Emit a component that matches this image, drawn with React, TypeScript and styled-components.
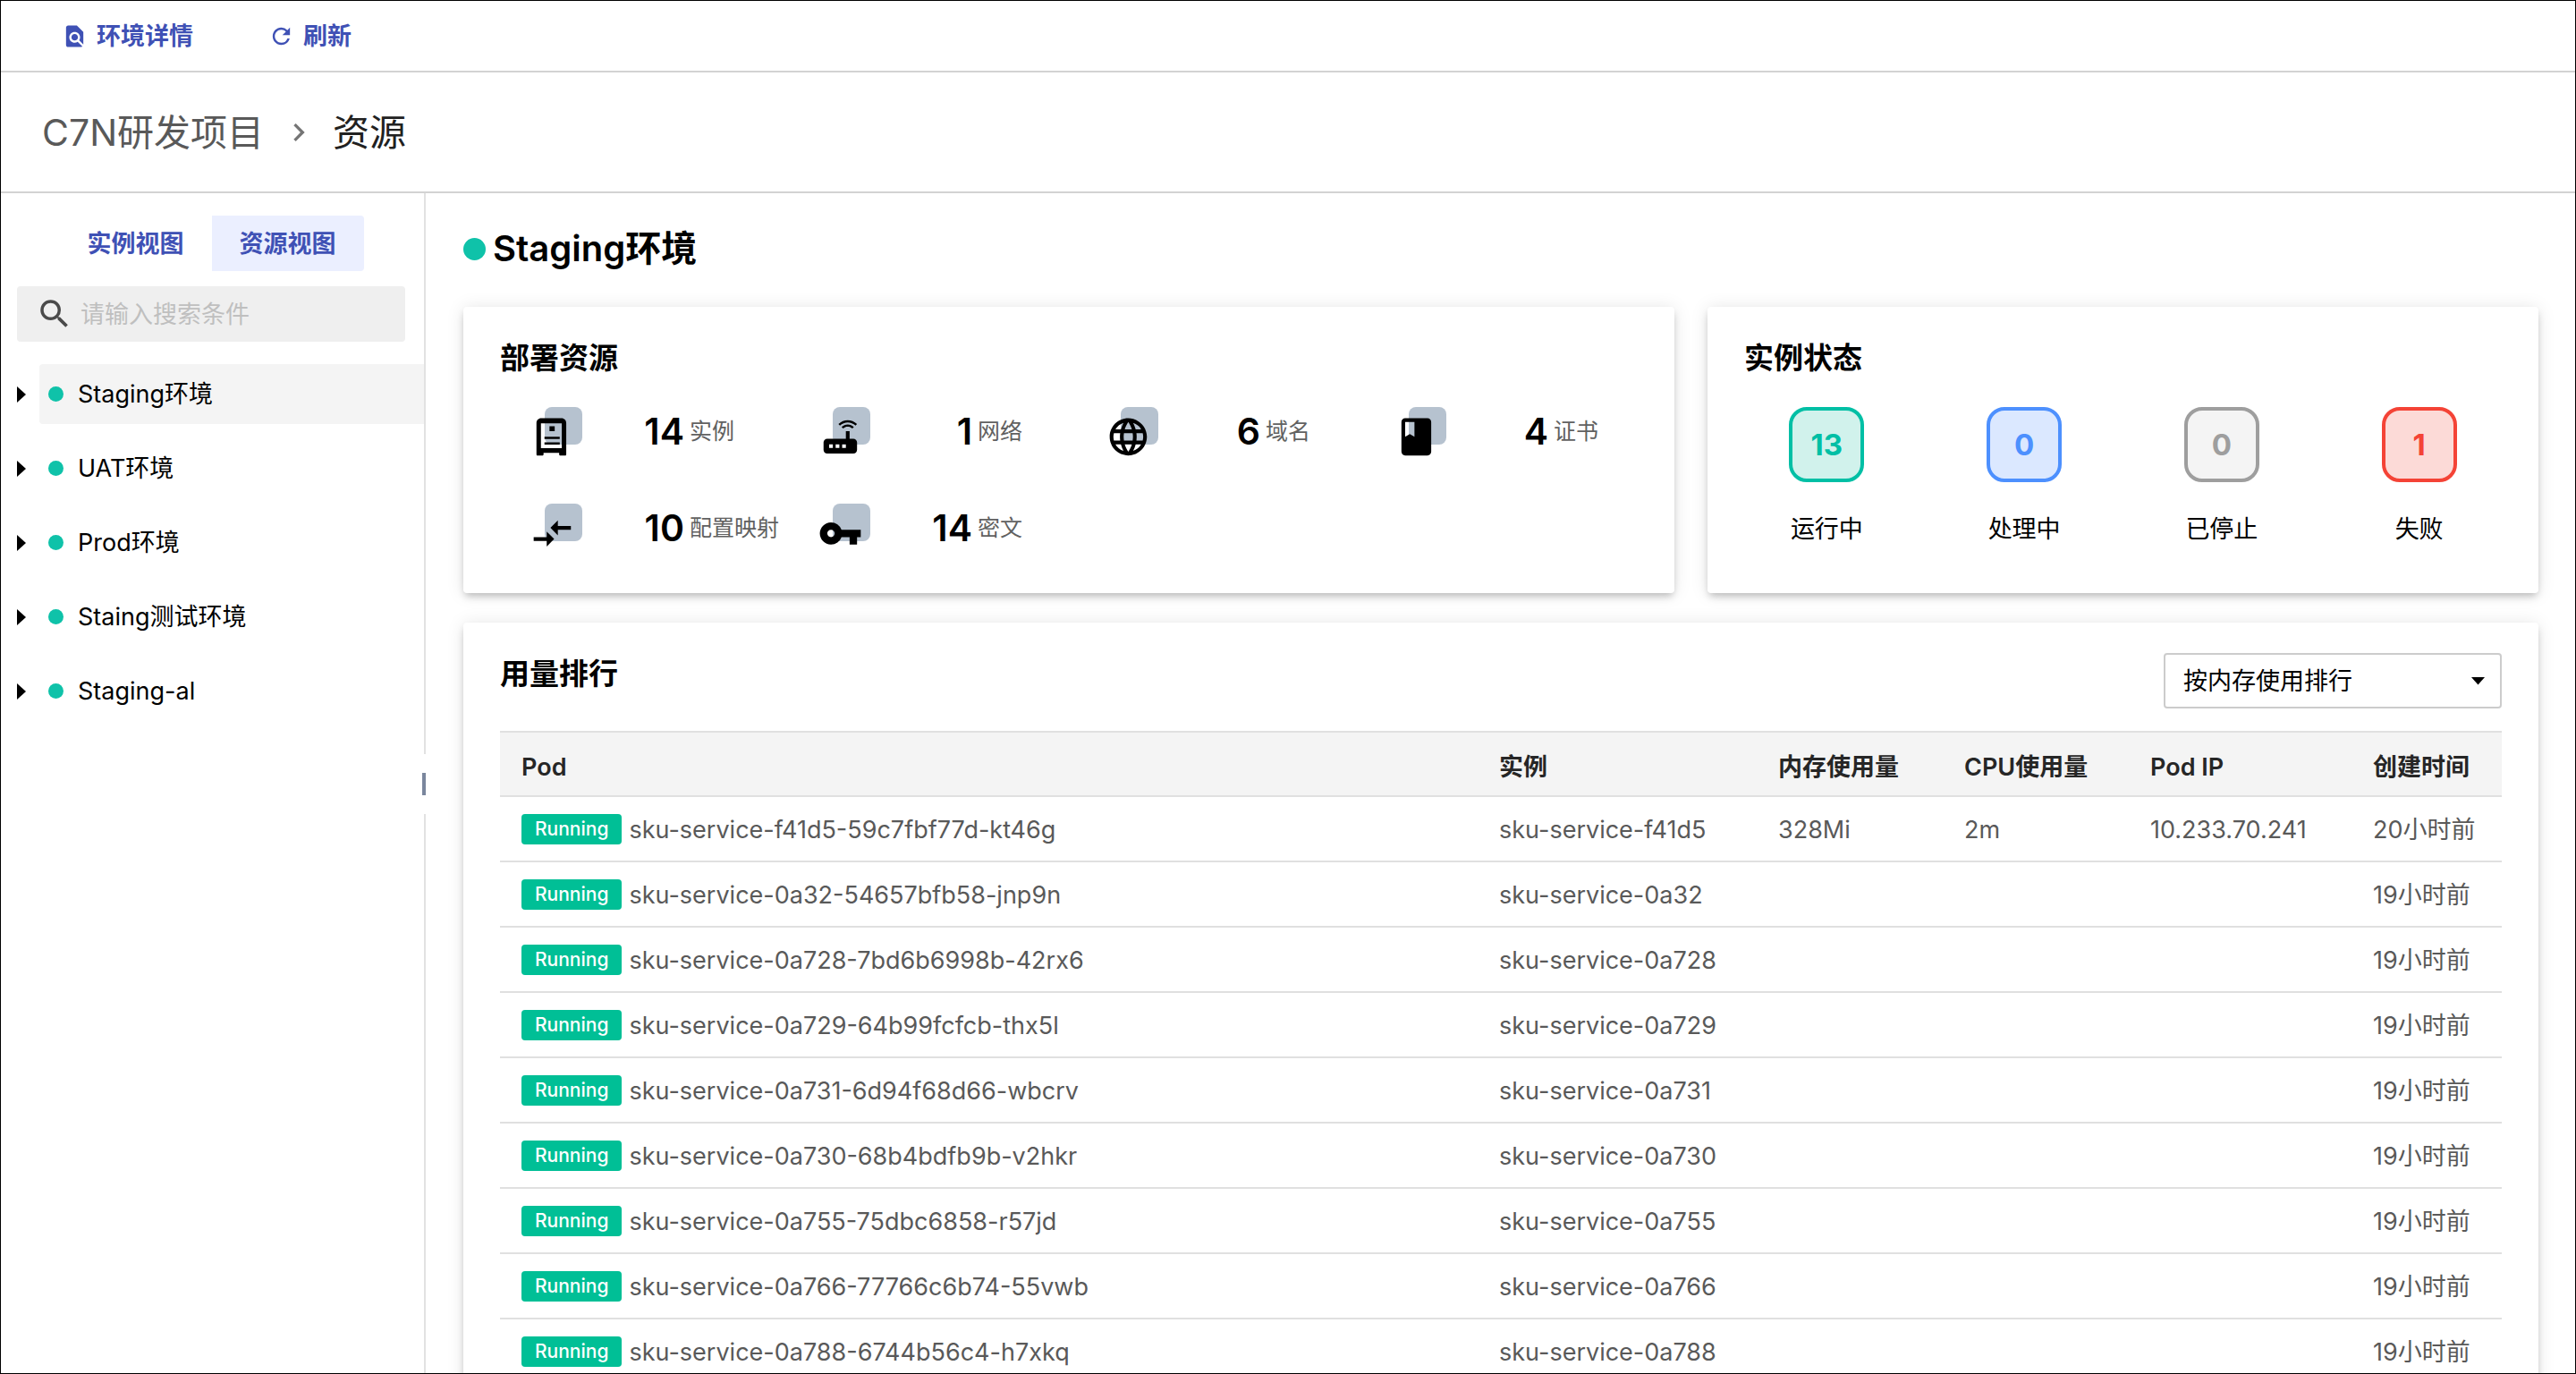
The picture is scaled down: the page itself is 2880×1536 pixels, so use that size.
import React, { useState } from 'react';
import styled, { createGlobalStyle } from 'styled-components';

const teal = '#0fc2a9';
const primary = '#3f51b5';

const GlobalStyle = createGlobalStyle`
  *, *::before, *::after { box-sizing: border-box; }
  body {
    margin: 0;
    background: #fff;
    color: #000;
    font-family: Inter, "Noto Sans CJK SC", sans-serif;
    font-size: 27px;
    line-height: 40px;
  }
  button, input, select { font: inherit; color: inherit; }
  h1, h2, p, ul, ol, dl, dd { margin: 0; padding: 0; }
  ul, ol { list-style: none; }
`;

const Page = styled.div`
  display: flex;
  flex-direction: column;
  height: 100vh;
  overflow: hidden;
  border: 1px solid #000;
`;

const Toolbar = styled.div`
  display: flex;
  flex: none;
  align-items: center;
  gap: 84px;
  height: 80px;
  padding: 2px 68px 0;
  border-bottom: 2px solid #d3d3d3;
`;

const ToolButton = styled.button`
  display: flex;
  align-items: center;
  gap: 10px;
  padding: 0;
  border: 0;
  background: none;
  color: ${primary};
  font-weight: 600;
  cursor: pointer;

  svg { margin-bottom: 2px; }
`;

const Glyph = styled.svg<{ $size: number }>`
  display: block;
  flex: none;
  width: ${p => p.$size}px;
  height: ${p => p.$size}px;
  fill: currentColor;
`;

const Breadcrumb = styled.nav`
  flex: none;
  height: 135px;
  padding: 0 46px;
  border-bottom: 2px solid #d3d3d3;

  ol {
    display: flex;
    align-items: center;
    height: 100%;
    font-size: 41px;
  }
`;

const CrumbLink = styled.a`
  color: #595959;
  text-decoration: none;
`;

const CrumbSeparator = styled.li`
  display: flex;
  width: 77px;
  justify-content: center;
  color: #757575;
`;

const CrumbCurrent = styled.li`
  color: #212121;
`;

const Body = styled.div`
  display: flex;
  flex: 1;
  min-height: 0;
`;

const Sidebar = styled.aside`
  flex: none;
  width: 473px;
  padding-top: 25px;
`;

const Tabs = styled.div`
  display: flex;
  justify-content: center;
  padding-right: 2px;
`;

const Tab = styled.button<{ $active?: boolean }>`
  height: 62px;
  padding: 2px 31px 0;
  border: 0;
  border-radius: 0 4px 4px 0;
  background: ${p => (p.$active ? '#ebefff' : 'transparent')};
  color: ${primary};
  font-weight: 600;
  cursor: pointer;
`;

const SearchBox = styled.label`
  display: flex;
  align-items: center;
  gap: 8px;
  height: 62px;
  margin: 17px 21px 25px 18px;
  padding: 0 21px;
  border-radius: 4px;
  background: #efefef;
  color: #4a4a4a;

  input {
    flex: 1;
    min-width: 0;
    padding: 2px 0 0;
    border: 0;
    outline: 0;
    background: none;
  }
  input::placeholder { color: #bfbfbf; opacity: 1; }
`;

const Tree = styled.ul`
  display: flex;
  flex-direction: column;
  gap: 16px;
`;

const TreeRow = styled.li`
  display: flex;
  align-items: center;
`;

const Expander = styled.button`
  display: flex;
  align-items: center;
  flex: none;
  width: 43px;
  height: 67px;
  padding: 0 0 0 18px;
  border: 0;
  background: none;
  cursor: pointer;
`;

const EnvButton = styled.button<{ $active?: boolean }>`
  display: flex;
  flex: 1;
  align-items: center;
  gap: 16px;
  height: 67px;
  padding: 0 10px;
  border: 0;
  border-radius: 4px 0 0 4px;
  background: ${p => (p.$active ? '#f4f4f4' : 'transparent')};
  cursor: pointer;
`;

const Dot = styled.span<{ $size: number }>`
  flex: none;
  width: ${p => p.$size}px;
  height: ${p => p.$size}px;
  border-radius: 50%;
  background: ${teal};
`;

const Divider = styled.div`
  display: flex;
  flex: none;
  flex-direction: column;
  align-items: flex-end;
  width: 4px;
  margin-left: -2px;

  &::before, &::after {
    content: '';
    width: 2px;
    background: #e2e2e2;
  }
  &::before { flex: 627; }
  &::after { flex: 625; }
`;

const Handle = styled.div`
  width: 4px;
  height: 25px;
  margin: 21px 0;
  background: #7a869d;
`;

const Main = styled.main`
  flex: 1;
  min-width: 0;
  overflow: hidden;
  padding: 41px 41px 0 42px;
`;

const EnvTitle = styled.h1`
  display: flex;
  align-items: center;
  gap: 8px;
  margin-bottom: 44px;
  font-size: 40px;
  font-weight: 600;
  line-height: 42px;
`;

const Card = styled.section`
  border-radius: 4px;
  background: #fff;
  box-shadow: 0 5px 8px -2px rgba(0, 0, 0, 0.24), 0 1px 20px 0 rgba(0, 0, 0, 0.1);
`;

const CardTitle = styled.h2`
  font-size: 33px;
  font-weight: 600;
  line-height: 33px;
`;

const Summary = styled.div`
  display: grid;
  grid-template-columns: 1354fr 929fr;
  gap: 37px;
  margin-bottom: 33px;
`;

const ResourceCard = styled(Card)`
  padding: 41px 25px 44px 41px;
`;

const ResourceGrid = styled.ul`
  display: grid;
  grid-template-columns: repeat(4, 1fr);
  row-gap: 52px;
  margin-top: 38px;
`;

const Resource = styled.li`
  display: flex;
  align-items: center;
  height: 56px;
  padding-left: 34px;
`;

const ResourceIcon = styled.svg`
  display: block;
  flex: none;
  width: 60px;
  height: 56px;
`;

const ResourceCount = styled.span`
  width: 112px;
  margin-right: 6px;
  padding-bottom: 2px;
  text-align: right;
  font-size: 41px;
  font-weight: 600;
`;

const ResourceLabel = styled.span`
  padding-bottom: 2px;
  color: #616161;
  font-size: 25px;
`;

const StatusCard = styled(Card)`
  padding: 41px 23px 44px;

  h2 { padding-left: 18px; }
`;

const StatusGrid = styled.ul`
  display: grid;
  grid-template-columns: repeat(4, 1fr);
  margin-top: 38px;
`;

const Status = styled.li`
  display: flex;
  flex-direction: column;
  align-items: center;
  gap: 33px;
`;

const StatusCount = styled.span<{ $color: string; $fill: string }>`
  display: flex;
  align-items: center;
  justify-content: center;
  width: 84px;
  height: 84px;
  border: 4px solid ${p => p.$color};
  border-radius: 20px;
  background: ${p => p.$fill};
  color: ${p => p.$color};
  font-size: 33px;
  font-weight: 700;
`;

const RankCard = styled(Card)`
  padding: 34px 41px;
`;

const RankHeader = styled.div`
  display: flex;
  align-items: flex-start;
  justify-content: space-between;
  margin-bottom: 25px;

  h2 { line-height: 46px; }
`;

const SelectBox = styled.div`
  position: relative;
  width: 378px;

  select {
    width: 100%;
    height: 62px;
    padding: 2px 20px 0;
    border: 2px solid #ccc;
    border-radius: 4px;
    background: #fff;
    appearance: none;
  }
  svg {
    position: absolute;
    top: 27px;
    right: 19px;
    pointer-events: none;
  }
`;

const Table = styled.table`
  width: 100%;
  border-spacing: 0;
  table-layout: fixed;

  th, td {
    padding: 0 0 0 24px;
    border-bottom: 2px solid #e0e0e0;
    text-align: left;
    white-space: nowrap;
  }
  th {
    height: 74px;
    padding-top: 8px;
    border-top: 2px solid #e0e0e0;
    background: #f4f4f4;
    color: #262626;
    font-weight: 600;
  }
  td {
    height: 73px;
    padding-top: 2px;
    color: #595959;
  }
`;

const Column = styled.col<{ $width?: number }>`
  width: ${p => (p.$width ? `${p.$width}px` : 'auto')};
`;

const Pod = styled.div`
  display: flex;
  align-items: center;
  gap: 8px;
`;

const Badge = styled.span`
  height: 34px;
  margin-bottom: 2px;
  padding: 0 15px;
  border-radius: 4px;
  background: #00bf96;
  color: #fff;
  font-size: 21px;
  font-weight: 500;
  line-height: 34px;
`;

const paths = {
  find: 'M20 19.59V8l-6-6H6c-1.1 0-1.99.9-1.99 2L4 20c0 1.1.89 2 1.99 2H18c.45 0 .85-.15 1.19-.4l-4.43-4.43c-.8.52-1.74.83-2.76.83-2.76 0-5-2.24-5-5s2.24-5 5-5 5 2.24 5 5c0 1.02-.31 1.96-.83 2.75L20 19.59zM9 13c0 1.66 1.34 3 3 3s3-1.34 3-3-1.34-3-3-3-3 1.34-3 3z',
  refresh: 'M17.65 6.35A7.958 7.958 0 0 0 12 4c-4.42 0-7.99 3.58-7.99 8s3.57 8 7.99 8c3.73 0 6.84-2.55 7.73-6h-2.08A5.99 5.99 0 0 1 12 18c-3.31 0-6-2.69-6-6s2.69-6 6-6c1.66 0 3.14.69 4.22 1.78L13 11h7V4l-2.35 2.35z',
  chevron: 'M10 6L8.59 7.41 13.17 12l-4.58 4.59L10 18l6-6z',
  search: 'M15.5 14h-.79l-.28-.27A6.471 6.471 0 0 0 16 9.5 6.5 6.5 0 1 0 9.5 16c1.61 0 3.09-.59 4.23-1.57l.27.28v.79l5 4.99L20.49 19l-4.99-5zm-6 0C7.01 14 5 11.99 5 9.5S7.01 5 9.5 5 14 7.01 14 9.5 11.99 14 9.5 14z',
  instance: 'M6 2h11c1.4 0 2.5 1.1 2.5 2.5v17c0 .4-.2.6-.6.6h-2.5c-.4 0-.7-.3-.7-.7v-.8H7.3v.8c0 .4-.3.7-.7.7H4.1c-.4 0-.6-.2-.6-.6v-17C3.5 3.1 4.6 2 6 2zM5.9 4.7v13.4h11.2V4.7zM10.5 6.3h2.8v2.6h-2.8zM7.8 11.9h8.2v1.3H7.8zM7.8 14.9h8.2v1.3H7.8z',
  network: 'M20.2 5.9l.8-.8C19.6 3.7 17.8 3 16 3s-3.6.7-5 2.1l.8.8C13 4.8 14.5 4.2 16 4.2s3 .6 4.2 1.7zm-.9.8c-.9-.9-2.1-1.4-3.3-1.4s-2.4.5-3.3 1.4l.8.8c.7-.7 1.6-1 2.5-1 .9 0 1.8.3 2.5 1l.8-.8zM19 13h-2V9h-2v4H5c-1.1 0-2 .9-2 2v4c0 1.1.9 2 2 2h14c1.1 0 2-.9 2-2v-4c0-1.1-.9-2-2-2zM8 18H6v-2h2v2zm3.5 0h-2v-2h2v2zm3.5 0h-2v-2h2v2z',
  domain: 'M11.99 2C6.47 2 2 6.48 2 12s4.47 10 9.99 10C17.52 22 22 17.52 22 12S17.52 2 11.99 2zm6.93 6h-2.95a15.65 15.65 0 0 0-1.38-3.56A8.03 8.03 0 0 1 18.92 8zM12 4.04c.83 1.2 1.48 2.53 1.91 3.96h-3.82c.43-1.43 1.08-2.76 1.91-3.96zM4.26 14C4.1 13.36 4 12.69 4 12s.1-1.36.26-2h3.38c-.08.66-.14 1.32-.14 2 0 .68.06 1.34.14 2H4.26zm.82 2h2.95c.32 1.25.78 2.45 1.38 3.56A7.987 7.987 0 0 1 5.08 16zm2.95-8H5.08a7.987 7.987 0 0 1 4.33-3.56A15.65 15.65 0 0 0 8.03 8zM12 19.96c-.83-1.2-1.48-2.53-1.91-3.96h3.82c-.43 1.43-1.08 2.76-1.91 3.96zM14.34 14H9.66c-.09-.66-.16-1.32-.16-2 0-.68.07-1.35.16-2h4.68c.09.65.16 1.32.16 2 0 .68-.07 1.34-.16 2zm.25 5.56c.6-1.11 1.06-2.31 1.38-3.56h2.95a8.03 8.03 0 0 1-4.33 3.56zM16.36 14c.08-.66.14-1.32.14-2 0-.68-.06-1.34-.14-2h3.38c.16.64.26 1.31.26 2s-.1 1.36-.26 2h-3.38z',
  certificate: 'M18 2H6c-1.1 0-2 .9-2 2v16c0 1.1.9 2 2 2h12c1.1 0 2-.9 2-2V4c0-1.1-.9-2-2-2zM6 4h5v8l-2.5-1.5L6 12V4z',
  mapping: 'M9.01 14H2v2h7.01v3L13 15l-3.99-4v3zm5.98-1v-3H22V8h-7.01V5L11 9l3.99 4z',
  secret: 'M12.65 10A5.99 5.99 0 0 0 7 6c-3.31 0-6 2.69-6 6s2.69 6 6 6a5.99 5.99 0 0 0 5.65-4H17v4h4v-4h2v-4H12.65zM7 14c-1.1 0-2-.9-2-2s.9-2 2-2 2 .9 2 2-.9 2-2 2z',
};

type IconName = keyof typeof paths;

const Icon = ({ name, size }: { name: IconName; size: number }) => (
  <Glyph $size={size} viewBox="0 0 24 24" aria-hidden="true">
    <path d={paths[name]} />
  </Glyph>
);

const environments = ['Staging环境', 'UAT环境', 'Prod环境', 'Staing测试环境', 'Staging-al'];

const resources: { icon: IconName; count: number; label: string }[] = [
  { icon: 'instance', count: 14, label: '实例' },
  { icon: 'network', count: 1, label: '网络' },
  { icon: 'domain', count: 6, label: '域名' },
  { icon: 'certificate', count: 4, label: '证书' },
  { icon: 'mapping', count: 10, label: '配置映射' },
  { icon: 'secret', count: 14, label: '密文' },
];

const statuses = [
  { label: '运行中', count: 13, color: '#00bfa5', fill: '#d1f2ec' },
  { label: '处理中', count: 0, color: '#4d90fe', fill: '#dbe8ff' },
  { label: '已停止', count: 0, color: '#9e9e9e', fill: '#f4f4f4' },
  { label: '失败', count: 1, color: '#f44336', fill: '#fcdad7' },
];

const columns: { title: string; width?: number }[] = [
  { title: 'Pod' },
  { title: '实例', width: 312 },
  { title: '内存使用量', width: 208 },
  { title: 'CPU使用量', width: 208 },
  { title: 'Pod IP', width: 249 },
  { title: '创建时间', width: 168 },
];

const pods = [
  ['sku-service-f41d5-59c7fbf77d-kt46g', 'sku-service-f41d5', '328Mi', '2m', '10.233.70.241', '20小时前'],
  ['sku-service-0a32-54657bfb58-jnp9n', 'sku-service-0a32', '', '', '', '19小时前'],
  ['sku-service-0a728-7bd6b6998b-42rx6', 'sku-service-0a728', '', '', '', '19小时前'],
  ['sku-service-0a729-64b99fcfcb-thx5l', 'sku-service-0a729', '', '', '', '19小时前'],
  ['sku-service-0a731-6d94f68d66-wbcrv', 'sku-service-0a731', '', '', '', '19小时前'],
  ['sku-service-0a730-68b4bdfb9b-v2hkr', 'sku-service-0a730', '', '', '', '19小时前'],
  ['sku-service-0a755-75dbc6858-r57jd', 'sku-service-0a755', '', '', '', '19小时前'],
  ['sku-service-0a766-77766c6b74-55vwb', 'sku-service-0a766', '', '', '', '19小时前'],
  ['sku-service-0a788-6744b56c4-h7xkq', 'sku-service-0a788', '', '', '', '19小时前'],
];

export default function App() {
  const [env, setEnv] = useState(environments[0]);

  return (
    <>
      <GlobalStyle />
      <Page>
        <Toolbar>
          <ToolButton type="button"><Icon name="find" size={29} />环境详情</ToolButton>
          <ToolButton type="button"><Icon name="refresh" size={29} />刷新</ToolButton>
        </Toolbar>

        <Breadcrumb>
          <ol>
            <li><CrumbLink href="#project">C7N研发项目</CrumbLink></li>
            <CrumbSeparator aria-hidden="true"><Icon name="chevron" size={40} /></CrumbSeparator>
            <CrumbCurrent>资源</CrumbCurrent>
          </ol>
        </Breadcrumb>

        <Body>
          <Sidebar>
            <Tabs>
              <Tab type="button">实例视图</Tab>
              <Tab type="button" $active>资源视图</Tab>
            </Tabs>
            <SearchBox>
              <Icon name="search" size={42} />
              <input type="text" placeholder="请输入搜索条件" />
            </SearchBox>
            <Tree>
              {environments.map(name => (
                <TreeRow key={name}>
                  <Expander type="button" aria-label={name}>
                    <svg width="10" height="18" viewBox="0 0 10 18" aria-hidden="true">
                      <path d="M0 0l10 9-10 9z" />
                    </svg>
                  </Expander>
                  <EnvButton type="button" $active={name === env} onClick={() => setEnv(name)}>
                    <Dot $size={17} />
                    {name}
                  </EnvButton>
                </TreeRow>
              ))}
            </Tree>
          </Sidebar>
          <Divider><Handle /></Divider>

          <Main>
            <EnvTitle><Dot $size={25} />{env}</EnvTitle>

            <Summary>
              <ResourceCard>
                <CardTitle>部署资源</CardTitle>
                <ResourceGrid>
                  {resources.map(({ icon, count, label }) => (
                    <Resource key={label}>
                      <ResourceIcon viewBox="0 0 60 56" aria-hidden="true">
                        <rect x="16" y="0" width="42" height="42" rx="8" fill="#b6c2cf" />
                        <path d={paths[icon]} transform="translate(-0.5 8.4) scale(2.08)" fillRule="evenodd" />
                      </ResourceIcon>
                      <ResourceCount>{count}</ResourceCount>
                      <ResourceLabel>{label}</ResourceLabel>
                    </Resource>
                  ))}
                </ResourceGrid>
              </ResourceCard>

              <StatusCard>
                <CardTitle>实例状态</CardTitle>
                <StatusGrid>
                  {statuses.map(({ label, count, color, fill }) => (
                    <Status key={label}>
                      <StatusCount $color={color} $fill={fill}>{count}</StatusCount>
                      <span>{label}</span>
                    </Status>
                  ))}
                </StatusGrid>
              </StatusCard>
            </Summary>

            <RankCard>
              <RankHeader>
                <CardTitle>用量排行</CardTitle>
                <SelectBox>
                  <select aria-label="用量排行">
                    <option>按内存使用排行</option>
                  </select>
                  <svg width="15" height="9" viewBox="0 0 15 9" aria-hidden="true">
                    <path d="M0 0h15L7.5 8.5z" />
                  </svg>
                </SelectBox>
              </RankHeader>
              <Table>
                <colgroup>
                  {columns.map(c => <Column key={c.title} $width={c.width} />)}
                </colgroup>
                <thead>
                  <tr>{columns.map(c => <th key={c.title} scope="col">{c.title}</th>)}</tr>
                </thead>
                <tbody>
                  {pods.map(([pod, ...cells]) => (
                    <tr key={pod}>
                      <td><Pod><Badge>Running</Badge>{pod}</Pod></td>
                      {cells.map((cell, i) => <td key={columns[i + 1].title}>{cell}</td>)}
                    </tr>
                  ))}
                </tbody>
              </Table>
            </RankCard>
          </Main>
        </Body>
      </Page>
    </>
  );
}
